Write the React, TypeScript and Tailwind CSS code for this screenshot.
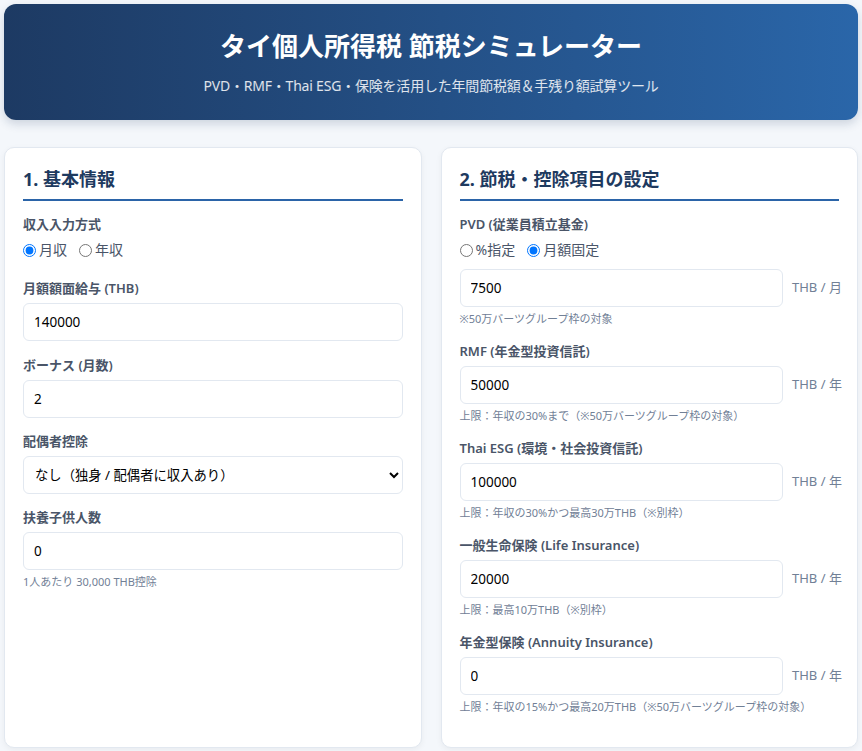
import React from 'react';

const font = { fontFamily: '"Noto Sans", "Noto Sans CJK JP", sans-serif' };

function Label({ children }: { children: React.ReactNode }) {
    return <label className="block text-[13px] leading-[18px] font-semibold text-[#4a5568] mb-[6px]">{children}</label>;
}

function Note({ children }: { children: React.ReactNode }) {
    return <p className="mt-[4px] text-[11px] leading-[16px] text-[#718096]">{children}</p>;
}

function TextInput({ value }: { value: string }) {
    return (
        <input
            type="number"
            defaultValue={value}
            className="block w-full h-[38px] px-[10px] rounded-[6px] border border-[#e2e8f0] bg-white text-[13.5px] text-black outline-none [appearance:textfield] [&::-webkit-inner-spin-button]:appearance-none"
        />
    );
}

function SuffixInput({ value, unit }: { value: string; unit: string }) {
    return (
        <div className="flex items-center gap-[9px]">
            <div className="flex-1">
                <TextInput value={value} />
            </div>
            <span className="w-[47px] text-[13px] text-[#718096] whitespace-nowrap">{unit}</span>
        </div>
    );
}

function Radio({ name, label, checked }: { name: string; label: string; checked?: boolean }) {
    return (
        <label className="inline-flex items-center gap-[3px] text-[14px] leading-[18px] text-[#4a5568]">
            <input type="radio" name={name} defaultChecked={checked} className="m-0 w-[13px] h-[13px]" />
            {label}
        </label>
    );
}

function SectionTitle({ children }: { children: React.ReactNode }) {
    return (
        <h2 className="text-[18px] leading-[27px] font-bold text-[#1e3a5f] pb-[6px] border-b-2 border-[#2b64a8] mb-[14px]">
            {children}
        </h2>
    );
}

export default function App() {
    return (
        <div className="min-h-screen bg-[#f4f7fb] p-[4px]" style={font}>
            {/* Header */}
            <header className="rounded-[12px] bg-gradient-to-r from-[#1d3a63] to-[#2a66a9] text-center pt-[23px] pb-[24px] shadow-[0_4px_10px_rgba(30,58,95,0.18)]">
                <h1 className="text-[26px] leading-[39px] font-bold text-white">タイ個人所得税 節税シミュレーター</h1>
                <p className="mt-[9px] text-[14px] leading-[21px] text-white/85 tracking-[-0.2px]">PVD・RMF・Thai ESG・保険を活用した年間節税額＆手残り額試算ツール</p>
            </header>

            <div className="grid grid-cols-2 gap-[19px] mt-[27px]">
                {/* Left card */}
                <section className="bg-white rounded-[10px] border border-[#e2e8f0] shadow-[0_2px_6px_rgba(0,0,0,0.05)] p-[18px]">
                    <SectionTitle>1. 基本情報</SectionTitle>

                    <div className="mb-[20px]">
                        <Label>収入入力方式</Label>
                        <div className="flex gap-[12px] mt-[8px]">
                            <Radio name="mode" label="月収" checked />
                            <Radio name="mode" label="年収" />
                        </div>
                    </div>

                    <div className="mb-[15px]">
                        <Label>月額額面給与 (THB)</Label>
                        <TextInput value="140000" />
                    </div>

                    <div className="mb-[14px]">
                        <Label>ボーナス (月数)</Label>
                        <TextInput value="2" />
                    </div>

                    <div className="mb-[14px]">
                        <Label>配偶者控除</Label>
                        <select className="block w-full h-[38px] px-[7px] rounded-[6px] border border-[#e2e8f0] bg-white text-[13.33px] text-black outline-none">
                            <option>なし（独身 / 配偶者に収入あり）</option>
                            <option>あり（配偶者に収入なし）</option>
                        </select>
                    </div>

                    <div>
                        <Label>扶養子供人数</Label>
                        <TextInput value="0" />
                        <Note>1人あたり 30,000 THB控除</Note>
                    </div>
                </section>

                {/* Right card */}
                <section className="bg-white rounded-[10px] border border-[#e2e8f0] shadow-[0_2px_6px_rgba(0,0,0,0.05)] p-[18px]">
                    <SectionTitle>2. 節税・控除項目の設定</SectionTitle>

                    <div className="mb-[15px]">
                        <Label>PVD (従業員積立基金)</Label>
                        <div className="flex gap-[12px] mt-[8px] mb-[10px]">
                            <Radio name="pvd" label="%指定" />
                            <Radio name="pvd" label="月額固定" checked />
                        </div>
                        <SuffixInput value="7500" unit="THB / 月" />
                        <Note>※50万バーツグループ枠の対象</Note>
                    </div>

                    <div className="mb-[15px]">
                        <Label>RMF (年金型投資信託)</Label>
                        <SuffixInput value="50000" unit="THB / 年" />
                        <Note>上限：年収の30%まで（※50万バーツグループ枠の対象）</Note>
                    </div>

                    <div className="mb-[15px]">
                        <Label>Thai ESG (環境・社会投資信託)</Label>
                        <SuffixInput value="100000" unit="THB / 年" />
                        <Note>上限：年収の30%かつ最高30万THB（※別枠）</Note>
                    </div>

                    <div className="mb-[15px]">
                        <Label>一般生命保険 (Life Insurance)</Label>
                        <SuffixInput value="20000" unit="THB / 年" />
                        <Note>上限：最高10万THB（※別枠）</Note>
                    </div>

                    <div className="mb-[14px]">
                        <Label>年金型保険 (Annuity Insurance)</Label>
                        <SuffixInput value="0" unit="THB / 年" />
                        <Note>上限：年収の15%かつ最高20万THB（※50万バーツグループ枠の対象）</Note>
                    </div>
                </section>
            </div>
        </div>
    );
}
